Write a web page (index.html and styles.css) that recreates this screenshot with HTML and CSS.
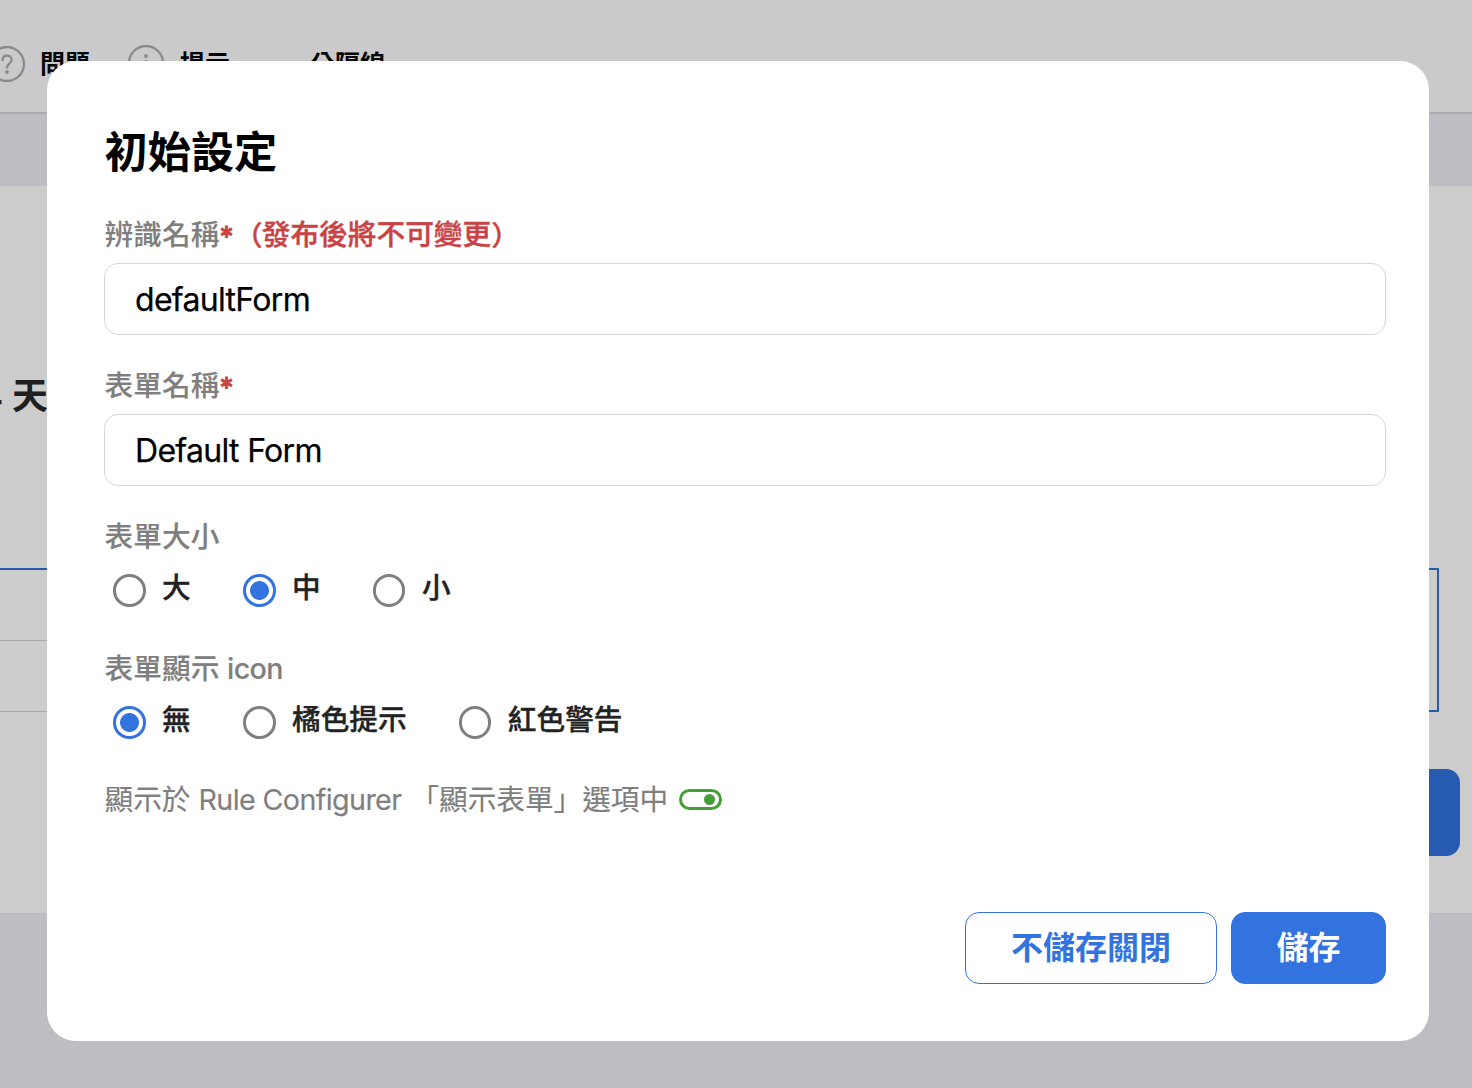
FILE: index.html
```
<!DOCTYPE html>
<html lang="zh-Hant">
<head>
<meta charset="utf-8">
<title>初始設定</title>
<link rel="stylesheet" href="styles.css">
</head>
<body>
<div class="page">
  <header class="toolbar">
    <div class="tool tool-question">
      <svg class="tool-icon" viewBox="0 0 36 36"><circle cx="18" cy="18" r="17"/><path d="M13.600 14.200c0-2.900 1.900-4.700 4.500-4.700s4.500 1.800 4.500 4.300c0 3.700-4.500 4-4.500 7.600"/><circle class="dot" cx="18" cy="26" r="1.900"/></svg>
      <span>問題</span>
    </div>
    <div class="tool tool-hint">
      <svg class="tool-icon" viewBox="0 0 36 36"><circle cx="18" cy="18" r="17"/><circle class="dot" cx="18" cy="11" r="1.900"/><path d="M17.300 16.200h.7v10M14.500 26h7"/></svg>
      <span>提示</span>
    </div>
    <div class="tool tool-divider"><span>分隔線</span></div>
  </header>
  <main class="sheet">
    <h2 class="question"><span class="question-number">-</span>天</h2>
    <div class="table">
      <div class="rows"><div class="row"></div><div class="row"></div></div>
      <div class="selection"></div>
    </div>
    <div class="sheet-actions"><div class="submit"></div></div>
  </main>
</div>
<div class="overlay">
  <section class="modal" role="dialog">
    <h1 class="title">初始設定</h1>
    <div class="field">
      <label class="label" for="key">辨識名稱<span class="required"><span class="star">*</span><span class="paren-open">（</span>發布後將不可變更<span class="paren-close">）</span></span></label>
      <input class="input input-key" id="key" value="defaultForm">
    </div>
    <div class="field">
      <label class="label" for="name">表單名稱<span class="required"><span class="star">*</span></span></label>
      <input class="input input-name" id="name" value="Default Form">
    </div>
    <div class="group">
      <div class="label">表單大小</div>
      <div class="options">
        <label class="option"><i class="radio"></i><span>大</span></label>
        <label class="option"><i class="radio checked"></i><span>中</span></label>
        <label class="option"><i class="radio"></i><span>小</span></label>
      </div>
    </div>
    <div class="group">
      <div class="label">表單顯示 <span class="latin-icon">icon</span></div>
      <div class="options">
        <label class="option"><i class="radio checked"></i><span>無</span></label>
        <label class="option"><i class="radio"></i><span>橘色提示</span></label>
        <label class="option"><i class="radio"></i><span>紅色警告</span></label>
      </div>
    </div>
    <div class="visibility">
      <span class="visibility-text">顯示於 <span class="latin-rule">Rule Configurer</span></span>
      <span class="visibility-text quoted">「顯示表單」選項中</span>
      <i class="toggle"></i>
    </div>
    <footer class="actions">
      <button class="button outline">不儲存關閉</button>
      <button class="button primary">儲存</button>
    </footer>
  </section>
</div>
</body>
</html>
```
FILE: styles.css
```
* { box-sizing: border-box; }
body {
  margin: 0;
  height: 1088px;
  overflow: hidden;
  background: #bebdc3;
  font-family: Inter, "Noto Sans CJK TC", sans-serif;
}
.page { height: 1088px; overflow: hidden; }

.toolbar {
  display: flex;
  align-items: flex-start;
  height: 114px;
  padding-top: 45px;
  background: #cacacc;
  border-bottom: 2px solid #adadae;
}
.tool { display: flex; gap: 15px; font-size: 25px; line-height: 38px; font-weight: 700; color: #050505; white-space: nowrap; }
.tool-icon { width: 36px; height: 36px; fill: none; stroke: #8b8b8d; stroke-width: 2.300; stroke-linecap: round; }
.tool-icon .dot { fill: #8b8b8d; stroke: none; }
.tool-question { margin-left: -11px; }
.tool-question .tool-icon { margin-top: 1px; }
.tool-hint { margin-left: 38px; gap: 16px; }
.tool-divider { margin-left: 80px; }

.sheet { height: 727px; margin-top: 72px; padding-top: 184px; background: #cccccc; }
.question { display: flex; gap: 9px; height: 52px; margin: 0 0 146px -13px; font-size: 36px; line-height: 52px; font-weight: 700; color: #202020; }
.question-number { width: 16px; padding-top: 4px; }
.table { display: flex; width: 1439px; height: 144px; }
.rows { width: 800px; border-top: 2px solid #275bb2; }
.row { height: 71px; border-bottom: 1px solid #aaaaaa; }
.selection { flex: 1; border: solid #275bb2; border-width: 2px 2px 2px 0; }
.sheet-actions { display: flex; justify-content: flex-end; padding: 57px 12px 0 0; }
.submit { width: 200px; height: 87px; border-radius: 14px; background: #275bb2; }

.overlay { position: absolute; inset: 0; padding: 61px 43px 47px 47px; }
.modal {
  display: flex;
  flex-direction: column;
  height: 980px;
  padding: 58px 43px 57px 57px;
  border-radius: 29px;
  background: #fff;
}
.title { margin: 0; height: 66px; font-size: 43.200px; line-height: 66px; font-weight: 700; color: #000; padding-left: 0.5px; }
.field { height: 151px; padding-top: 29px; }
.label { display: block; height: 49px; padding-left: 0.6px; font-size: 28.700px; line-height: 42px; font-weight: 500; color: #7f7f7f; white-space: pre; -webkit-text-stroke: 0.15px; }
.required { color: #c94346; -webkit-text-stroke: 0.4px; }
.star { display: inline-block; width: 13.700px; line-height: 30px; font-size: 28px; transform: translateY(1.5px); -webkit-text-stroke: 0.9px; }
.paren-open { display: inline-block; width: 28.700px; transform: translateX(1px) scaleY(0.95); }
.paren-close { display: inline-block; transform: scaleY(0.95); }
.input {
  display: block;
  width: 1282px;
  height: 72px;
  padding: 0 30px;
  border: 1px solid #d7d7d7;
  border-radius: 14px;
  outline: 0;
  background: #fff;
  color: #000;
  font: 400 32px/40px Inter, "Noto Sans CJK TC", sans-serif;
  letter-spacing: -0.69px;
  -webkit-text-stroke: 0.25px;
}
.group { height: 132px; padding-top: 29px; }
.group .label { height: 49px; }
.latin-icon { letter-spacing: -0.6px; }
.options { display: flex; gap: 52.200px; padding-left: 9px; }
.option { display: flex; gap: 16.500px; font-size: 28.650px; line-height: 45px; font-weight: 500; color: #222; -webkit-text-stroke: 0.35px; }
.radio { width: 32.600px; height: 32.600px; margin-top: 9px; border: 3px solid #7f7f7f; border-radius: 50%; background: #fff; }
.radio.checked { border-color: #3273df; background: radial-gradient(circle, #3273df 9px, #fff 9.800px); }
.visibility { display: flex; align-items: center; height: 41px; margin-top: 28px; padding-left: 0.5px; font-size: 28.650px; line-height: 41px; color: #7f7f7f; white-space: pre; -webkit-text-stroke: 0.15px; }
.latin-rule { letter-spacing: -0.6px; }
.quoted { margin-left: 9px; }
.toggle { display: flex; align-items: center; justify-content: flex-end; width: 43px; height: 21px; margin-left: 11px; padding-right: 4px; border: 3px solid #459f37; border-radius: 11px; }
.toggle::after { content: ""; width: 11px; height: 11px; border-radius: 50%; background: #459f37; }
.actions { display: flex; justify-content: flex-end; gap: 14px; margin-top: auto; }
.button { height: 72px; padding: 0; border: 1px solid #3273df; border-radius: 14px; font: 700 32px/70px Inter, "Noto Sans CJK TC", sans-serif; }
.outline { width: 252px; background: #fff; color: #3273df; }
.primary { width: 155px; background: #3273df; color: #fff; }
```
